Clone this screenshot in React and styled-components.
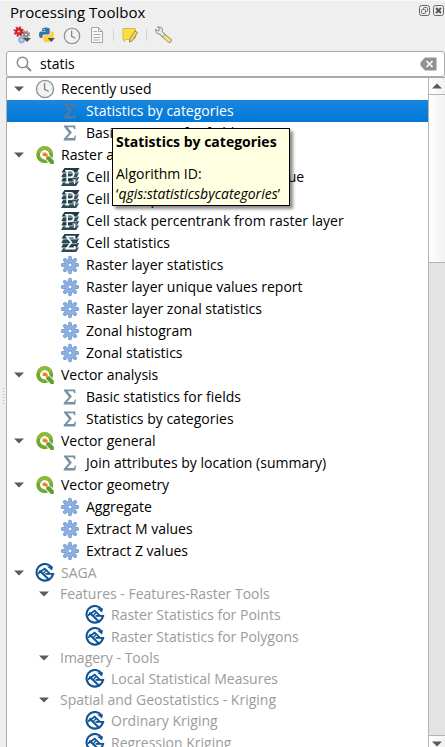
import React, { useState } from "react";
import styled, { createGlobalStyle, css } from "styled-components";

const Global = createGlobalStyle`
  *, *::before, *::after { box-sizing: border-box; }
  body { margin: 0; background: #efefef; }
  body, button, input { font-family: "Open Sans", "Noto Sans", sans-serif; font-size: 14px; color: #000; }
  button { margin: 0; padding: 0; border: 0; background: none; }
  ul { margin: 0; padding: 0; list-style: none; }
`;

const Dock = styled.section`
  display: flex;
  flex-direction: column;
  height: 100vh;
  overflow: hidden;
  background: #efefef;
  border-top: 1px solid #f7f7f7;
`;

const TitleBar = styled.header`
  display: flex;
  align-items: center;
  flex: none;
  height: 22px;
  padding: 0 1px 0 10px;
`;

const Title = styled.h1`
  flex: 1;
  margin: 0;
  font-size: 15px;
  line-height: 22px;
  font-weight: 400;
`;

const TitleButton = styled.button`
  display: flex;
  margin: 0 0 3px 3px;
`;

const Toolbar = styled.div`
  display: flex;
  align-items: center;
  flex: none;
  gap: 7px;
  height: 28px;
  padding: 0 13px 4px;
`;

const ToolButton = styled.button`
  display: flex;
  width: 18px;
  height: 18px;
`;

const ToolSeparator = styled.span`
  width: 1px;
  height: 12px;
  background: #d2d2d2;
`;

const SearchBox = styled.label`
  display: flex;
  align-items: center;
  flex: none;
  height: 26px;
  margin-left: 6px;
  padding: 0 7px 0 9px;
  background: #fff;
  border: 1px solid #a9a9a9;
  border-radius: 3px;
`;

const SearchInput = styled.input`
  flex: 1;
  min-width: 0;
  margin-left: 8px;
  padding: 0;
  border: 0;
  outline: 0;
  background: none;
  line-height: 20px;
`;

const ClearButton = styled.button`
  display: flex;
`;

const Body = styled.div`
  display: flex;
  flex: 1;
  min-height: 0;
`;

const Grip = styled.div`
  display: flex;
  flex-direction: column;
  justify-content: center;
  align-items: center;
  gap: 2px;
  width: 6px;
  padding-bottom: 32px;
`;

const GripDot = styled.span`
  width: 1px;
  height: 1px;
  background: #a8a8a8;
`;

const TreeFrame = styled.div`
  position: relative;
  flex: 1;
  min-width: 0;
  overflow: hidden;
  background: #fff;
  border-top: 1px solid #a9a9a9;
  border-left: 1px solid #b0b0b0;
`;

const Row = styled.div`
  display: flex;
  align-items: center;
  height: ${(p) => (p.$compact ? 20 : 22)}px;
  padding-left: ${(p) => 3 + p.$level * 25}px;
  color: ${(p) => (p.$muted ? "#9b9b9b" : "#000")};
  white-space: nowrap;
  ${(p) =>
    p.$selected &&
    css`
      color: #fff;
      background: linear-gradient(#1a86de, #0078d7);
    `}
`;

const Expander = styled.button`
  display: flex;
  justify-content: center;
  width: 18px;
  margin-right: 7px;
`;

const IconCell = styled.span`
  display: flex;
  justify-content: center;
  width: 20px;
  margin-right: 6px;
`;

const Label = styled.span`
  line-height: 20px;
`;

const Tooltip = styled.div`
  position: absolute;
  z-index: 1;
  left: 105px;
  top: 50px;
  padding: 3px 9px 1px 3px;
  background: #ffffe1;
  border: 1px solid #000;
  box-shadow: 3px 3px 3px rgba(0, 0, 0, 0.45);
  line-height: 20px;
  white-space: nowrap;
`;

const TipHeading = styled.p`
  margin: 0 0 12px;
  font-weight: 700;
`;

const TipText = styled.p`
  margin: 0;
`;

const ScrollTrack = styled.div`
  display: flex;
  flex-direction: column;
  width: 17px;
  margin-bottom: -5px;
  background: #e3e3e3;
  border-top: 1px solid #a9a9a9;
  border-left: 1px solid #b4b4b4;
`;

const ScrollArrow = styled.button`
  display: flex;
  justify-content: center;
  align-items: center;
  flex: none;
  height: 16px;
  background: linear-gradient(90deg, #fff, #f1f1f1);
`;

const ScrollThumb = styled.div`
  flex: none;
  height: 25%;
  background: linear-gradient(90deg, #fff, #f1f1f1);
  border: solid #b4b4b4;
  border-width: 1px 0;
`;

const ScrollSpace = styled.div`
  flex: 1;
  border-bottom: 1px solid #b4b4b4;
`;

const Triangle = ({ up }) => (
  <svg width="10" height="6" viewBox="0 0 10 6" aria-hidden="true">
    <path d={up ? "M0 5.5 5 .5l5 5z" : "M0 .5h10l-5 5z"} fill="#5a5a5a" />
  </svg>
);

const Clock = () => (
  <svg width="20" height="20" viewBox="0 0 20 20" aria-hidden="true">
    <circle cx="10" cy="10" r="8.6" fill="#f3f3f3" stroke="#929292" strokeWidth="1.3" />
    <path d="M9.6 4v6.3l4.2 2.2" fill="none" stroke="#858585" strokeWidth="1.4" />
    <path d="M10 2.5v1M10 16.5v1M2.5 10h1M16.5 10h1" stroke="#b5b5b5" />
  </svg>
);

const Sigma = ({ selected }) => (
  <svg width="14" height="16" viewBox="0 0 14 16" aria-hidden="true">
    <path
      d="M1 .5h11.300v3.700h-1.200L10.300 2.200H4.600l4.300 5.400-4.700 5.500h6.700l1.100-2.600H13l-.7 5H.7v-1.500l5.200-6L1 1.800z"
      fill={selected ? "#54799c" : "#7690a4"}
    />
  </svg>
);

const QLogo = () => (
  <svg width="20" height="20" viewBox="0 0 20 20" aria-hidden="true">
    <circle cx="9.700" cy="9.700" r="6.600" fill="#fff" stroke="#6fa92f" strokeWidth="3.800" />
    <path d="M3.500 7.400a6.600 6.600 0 0 1 12.400 0" fill="none" stroke="#8cb93a" strokeWidth="3.800" />
    <path d="m10.500 10.500 9 9" stroke="#fff" strokeWidth="6" />
    <path d="M11.200 11.200h3.300l4.300 4.500v3.200h-2.900l-4.700-4.800z" fill="#5f9f30" />
    <path d="M7.400 7.400h3.500l2 2v2.700l-1.300.3-1.700-1.500H7.400z" fill="#f29a45" />
    <circle cx="10" cy="9.700" r="1.200" fill="#e86c1f" />
  </svg>
);

const Gear = () => (
  <svg width="20" height="20" viewBox="0 0 20 20" aria-hidden="true">
    <g stroke="#7398cd" strokeWidth="3.800" strokeLinecap="round">
      <path d="M10 2.700v14.600M2.700 10h14.600M4.900 4.900l10.200 10.200M15.100 4.900 4.900 15.100" />
    </g>
    <circle cx="10" cy="10" r="6" fill="#7398cd" />
    <g stroke="#8cb0e0" strokeWidth="2.400" strokeLinecap="round">
      <path d="M10 2.700v14.600M2.700 10h14.600M4.900 4.900l10.200 10.200M15.100 4.900 4.900 15.100" />
    </g>
    <circle cx="10" cy="10" r="5.200" fill="#8cb0e0" />
    <circle cx="10" cy="10" r="2" fill="#fff" stroke="#7398cd" />
  </svg>
);

const Layers = ({ children }) => (
  <svg width="20" height="20" viewBox="0 0 20 20" aria-hidden="true">
    <path d="M4.500 1h15l-2.500 4.600H1.500z" fill="#1f3b45" />
    <path d="M3.500 5.600h15.500L17 10H1.300z" fill="#2c4b57" />
    <path d="M3.500 10h15.500L17 14.400H1.300z" fill="#1f3b45" />
    <path d="M3.500 14.400h15.500L16.200 19H1z" fill="#2c4b57" />
    <path d="M3 6.200h14.500M2.500 10.600h15M2.500 14.900h15" stroke="#8aa1aa" strokeWidth="1.200" />
    {children}
  </svg>
);

const LayersRank = () => (
  <Layers>
    <path d="M7.200 15.500V3.700h3.300a3.200 3.200 0 0 1 0 6.500H7.200M5 3.700h2.500M5.300 15.700h3.900" fill="none" stroke="#fff" strokeWidth="1.600" />
    <path d="M12.500 13h4M14.500 13v4" stroke="#fff" strokeWidth="1.200" />
  </Layers>
);

const LayersSum = () => (
  <Layers>
    <path d="M14.500 6V3.600H6.700l4.600 6-4.900 6h8.300V13" fill="none" stroke="#fff" strokeWidth="1.700" />
  </Layers>
);

const Saga = () => (
  <svg width="20" height="20" viewBox="0 0 20 20" aria-hidden="true">
    <g fill="none" stroke="#0d5596">
      <path d="M16.600 4.400A8.300 8.300 0 1 0 18 11" strokeWidth="2.100" />
      <path d="M19.200 10.900H10.500" strokeWidth="1.800" />
      <path d="M3 10.500 9.700 5.700l5.100 5" strokeWidth="1.700" />
      <path d="m4.300 7.500 10.400 9.700" strokeWidth="2" />
      <path d="m8 11 3-3.500" strokeWidth="1.200" />
    </g>
    <path d="M12 3.500h6l-1 4z" fill="#0d5596" />
  </svg>
);

const Magnifier = () => (
  <svg width="16" height="16" viewBox="0 0 16 16" aria-hidden="true">
    <circle cx="6.500" cy="6.500" r="5.200" fill="none" stroke="#8d8d8d" strokeWidth="1.500" />
    <path d="m10.500 10.500 4.500 4.500" stroke="#8d8d8d" strokeWidth="2" />
  </svg>
);

const ClearIcon = () => (
  <svg width="17" height="14" viewBox="0 0 17 14" aria-hidden="true">
    <path d="M5 .5h11.500v13H5L.5 8.500v-3z" fill="#919191" />
    <path d="m6.500 4 6 6M12.500 4l-6 6" stroke="#fff" strokeWidth="1.600" />
  </svg>
);

const FloatIcon = () => (
  <svg width="11" height="11" viewBox="0 0 11 11" aria-hidden="true" fill="none" stroke="#666">
    <rect x=".5" y=".5" width="10" height="10" rx="2" />
    <rect x="4.500" y="2.500" width="4" height="4" rx="1" />
    <rect x="2.500" y="4.500" width="4" height="4" rx="1" fill="#efefef" />
  </svg>
);

const CloseIcon = () => (
  <svg width="11" height="11" viewBox="0 0 11 11" aria-hidden="true" fill="none" stroke="#666">
    <rect x=".5" y=".5" width="10" height="10" rx="2" />
    <path d="m3 3 5 5M8 3 3 8" stroke="#555" strokeWidth="2" />
  </svg>
);

const ModelsIcon = () => (
  <svg width="18" height="18" viewBox="0 0 18 18" aria-hidden="true">
    <g fill="none">
      <circle cx="8.500" cy="14" r="2.200" stroke="#8fb2e2" strokeWidth="2.400" />
      <circle cx="13" cy="8.500" r="3" stroke="#858585" strokeWidth="2" strokeDasharray="1.300 1.060" />
      <circle cx="13" cy="8.500" r="1.800" stroke="#858585" strokeWidth="1.700" />
      <circle cx="5.700" cy="5.500" r="4" stroke="#d3222a" strokeWidth="2.400" strokeDasharray="1.700 1.440" />
      <circle cx="5.700" cy="5.500" r="2.400" stroke="#d3222a" strokeWidth="2.600" />
    </g>
    <path d="M10 12h8l-4 4z" fill="#505050" />
  </svg>
);

const PythonIcon = () => (
  <svg width="18" height="18" viewBox="0 0 18 18" aria-hidden="true">
    <path d="M4 5V3.500Q4 1.500 8 1.500t3.700 2V7q0 1.600-1.700 1.600H6.300Q4.400 8.600 4.400 10.500V12H3Q1 12 1 8.700T3 5.500h5V5z" fill="#3573a8" />
    <path d="M12.500 5.500H14q2 0 2 3.200T14 12.200H9v.6h3.600v1.400q0 2-3.700 2t-3.700-2v-3q0-1.900 1.900-1.900h3.400q2 0 2-1.800z" fill="#ffcf40" />
    <circle cx="6" cy="3.500" r=".7" fill="#fff" />
    <path d="M9.500 12H17l-3.700 4z" fill="#505050" />
  </svg>
);

const ReportIcon = () => (
  <svg width="18" height="18" viewBox="0 0 18 18" aria-hidden="true" fill="none">
    <path d="M3.500 1.500h7l4 4v11h-11z" fill="#f8f8f8" stroke="#a3a3a3" />
    <path d="M10.500 1.500v4h4" stroke="#a3a3a3" />
    <path d="M5.500 5.500H9M5.500 8.500h7M5.500 11.500h7M5.500 14h6" stroke="#aaa" strokeWidth="1.200" />
  </svg>
);

const EditIcon = () => (
  <svg width="18" height="18" viewBox="0 0 18 18" aria-hidden="true">
    <path d="M2 2.500h12.500V12L9 13.500H5l-2 2v-2H2z" fill="#f8df48" stroke="#d9bd31" />
    <path d="m9 12.500 5-7.500 2.500 1.500-5 8L8.500 16z" fill="#f5d96b" stroke="#96894e" />
  </svg>
);

const WrenchIcon = () => (
  <svg width="18" height="18" viewBox="0 0 18 18" aria-hidden="true">
    <path d="m9 9 6.500 5.500" stroke="#9a8957" strokeWidth="4.500" strokeLinecap="round" />
    <path d="m9.500 9.500 6 5" stroke="#f3dc83" strokeWidth="3" strokeLinecap="round" />
    <path d="M1.500 3.500 4.500 5l1-2L3.500 1q4-.8 5 2.200l-.3 2.300L11 8.500 8.500 11 5.700 8Q1.500 8 1.500 3.500z" fill="#e8e8e8" stroke="#858585" />
  </svg>
);

const icons = { clock: Clock, sigma: Sigma, q: QLogo, gear: Gear, rank: LayersRank, sum: LayersSum, saga: Saga };

const leaf = (icon, label) => ({ icon, label });

const tree = [
  {
    icon: "clock",
    label: "Recently used",
    children: [{ ...leaf("sigma", "Statistics by categories"), selected: true }, leaf("sigma", "Basic statistics for fields")],
  },
  {
    icon: "q",
    label: "Raster analysis",
    children: [
      leaf("rank", "Cell stack percentrank from value"),
      leaf("rank", "Cell stack percentile"),
      leaf("rank", "Cell stack percentrank from raster layer"),
      leaf("sum", "Cell statistics"),
      leaf("gear", "Raster layer statistics"),
      leaf("gear", "Raster layer unique values report"),
      leaf("gear", "Raster layer zonal statistics"),
      leaf("gear", "Zonal histogram"),
      leaf("gear", "Zonal statistics"),
    ],
  },
  {
    icon: "q",
    label: "Vector analysis",
    children: [leaf("sigma", "Basic statistics for fields"), leaf("sigma", "Statistics by categories")],
  },
  { icon: "q", label: "Vector general", children: [leaf("sigma", "Join attributes by location (summary)")] },
  {
    icon: "q",
    label: "Vector geometry",
    children: [leaf("gear", "Aggregate"), leaf("gear", "Extract M values"), leaf("gear", "Extract Z values")],
  },
  {
    icon: "saga",
    label: "SAGA",
    muted: true,
    children: [
      {
        label: "Features - Features-Raster Tools",
        children: [leaf("saga", "Raster Statistics for Points"), leaf("saga", "Raster Statistics for Polygons")],
      },
      { label: "Imagery - Tools", children: [leaf("saga", "Local Statistical Measures")] },
      {
        label: "Spatial and Geostatistics - Kriging",
        children: [leaf("saga", "Ordinary Kriging"), leaf("saga", "Regression Kriging")],
      },
    ],
  },
];

function TreeNode({ node, level = 0, muted = false }) {
  const [open, setOpen] = useState(true);
  const Icon = icons[node.icon];
  const dim = muted || node.muted;
  return (
    <li role="treeitem" aria-expanded={node.children ? open : undefined} aria-selected={!!node.selected}>
      <Row $level={level} $compact={!Icon} $muted={dim} $selected={node.selected}>
        {node.children ? (
          <Expander aria-label={`Toggle ${node.label}`} onClick={() => setOpen(!open)}>
            <Triangle />
          </Expander>
        ) : (
          <Expander as="span" />
        )}
        {Icon && (
          <IconCell>
            <Icon selected={node.selected} />
          </IconCell>
        )}
        <Label>{node.label}</Label>
      </Row>
      {node.children && open && (
        <ul role="group">
          {node.children.map((child) => (
            <TreeNode key={child.label} node={child} level={level + 1} muted={dim} />
          ))}
        </ul>
      )}
    </li>
  );
}

export default function App() {
  const [query, setQuery] = useState("statis");
  return (
    <>
      <Global />
      <Dock>
        <TitleBar>
          <Title>Processing Toolbox</Title>
          <TitleButton aria-label="Float panel"><FloatIcon /></TitleButton>
          <TitleButton aria-label="Close panel"><CloseIcon /></TitleButton>
        </TitleBar>
        <Toolbar role="toolbar">
          <ToolButton aria-label="Models"><ModelsIcon /></ToolButton>
          <ToolButton aria-label="Scripts"><PythonIcon /></ToolButton>
          <ToolButton aria-label="History"><Clock /></ToolButton>
          <ToolButton aria-label="Results"><ReportIcon /></ToolButton>
          <ToolSeparator />
          <ToolButton aria-label="Edit in place"><EditIcon /></ToolButton>
          <ToolSeparator />
          <ToolButton aria-label="Options"><WrenchIcon /></ToolButton>
        </Toolbar>
        <SearchBox>
          <Magnifier />
          <SearchInput aria-label="Search" value={query} onChange={(e) => setQuery(e.target.value)} />
          <ClearButton aria-label="Clear search" onClick={() => setQuery("")}><ClearIcon /></ClearButton>
        </SearchBox>
        <Body>
          <Grip>
            {[0, 1, 2, 3, 4, 5].map((dot) => <GripDot key={dot} />)}
          </Grip>
          <TreeFrame>
            <ul role="tree" aria-label="Algorithms">
              {tree.map((node) => <TreeNode key={node.label} node={node} />)}
            </ul>
            <Tooltip role="tooltip">
              <TipHeading>Statistics by categories</TipHeading>
              <TipText>Algorithm ID:</TipText>
              <TipText>‘<em>qgis:statisticsbycategories</em>’</TipText>
            </Tooltip>
          </TreeFrame>
          <ScrollTrack>
            <ScrollArrow aria-label="Scroll up"><Triangle up /></ScrollArrow>
            <ScrollThumb />
            <ScrollSpace />
            <ScrollArrow aria-label="Scroll down"><Triangle /></ScrollArrow>
          </ScrollTrack>
        </Body>
      </Dock>
    </>
  );
}
